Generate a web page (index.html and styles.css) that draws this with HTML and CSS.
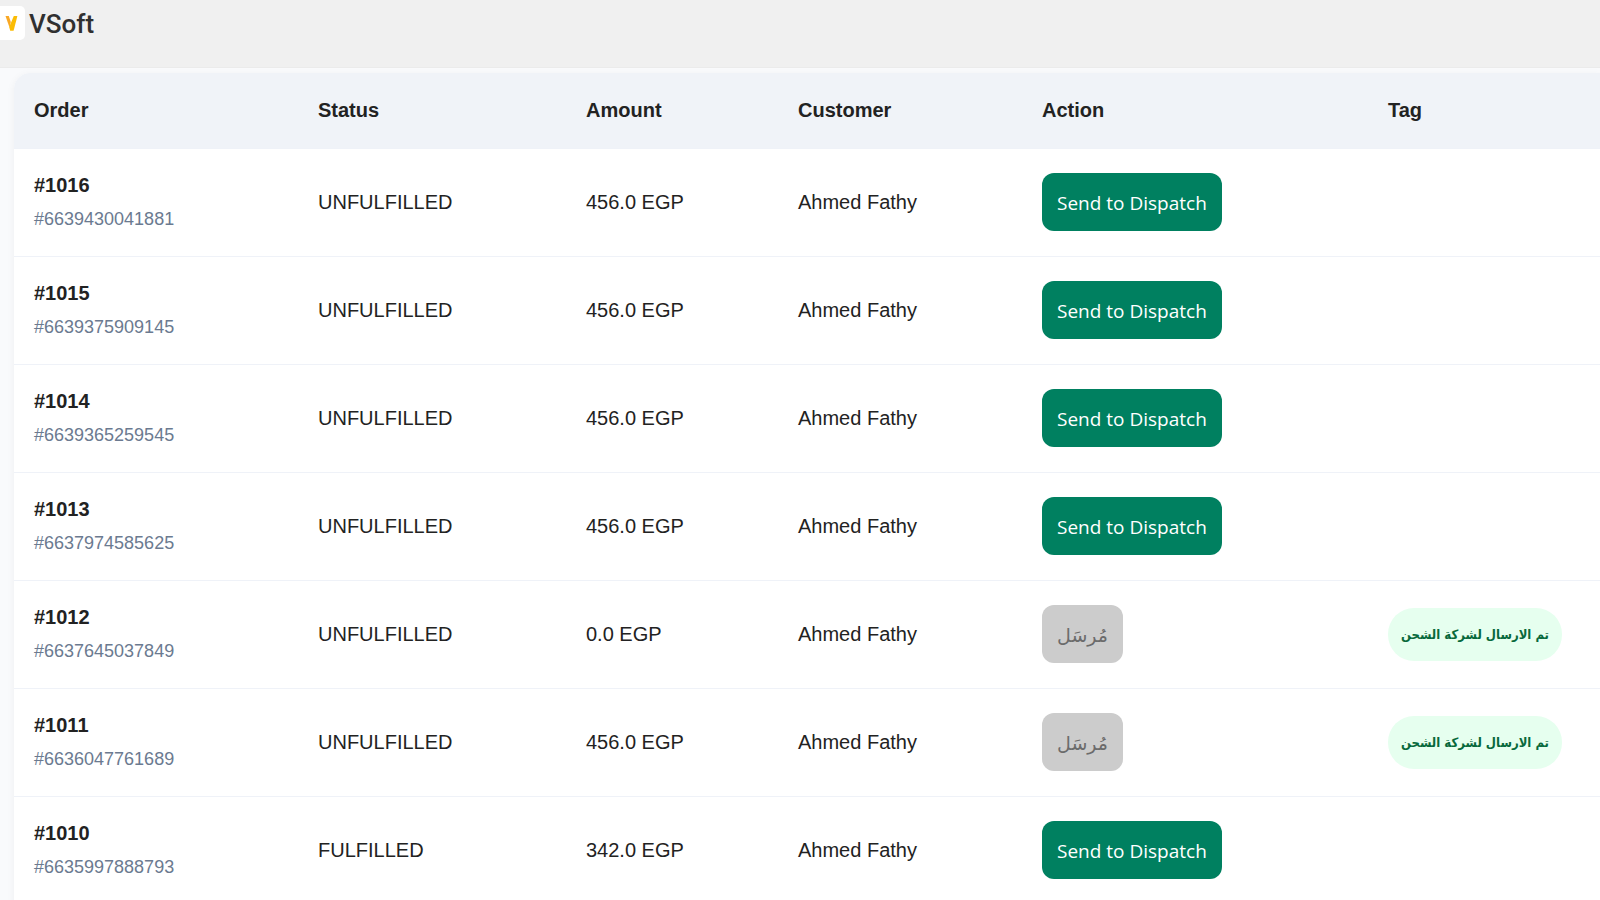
FILE: index.html
```html
<!DOCTYPE html>
<html lang="en">
<head>
    <meta charset="UTF-8">
    <meta name="viewport" content="width=device-width, initial-scale=1.0">
    <title>VSoft</title>
    <link rel="stylesheet" href="styles.css">
</head>
<body>
    <header class="header">
        <svg class="logo" viewBox="0 0 25 34" aria-hidden="true">
            <rect x="-6" width="31" height="34" rx="5" fill="#fff"/>
            <path d="M5.500 10h3.300l2 6-1.300 5.500z" fill="#f9a825"/>
            <path d="M9.200 21L13.800 10h3.600L13.600 24.800h-3.400z" fill="#fbbc04"/>
        </svg>
        <h1>VSoft</h1>
    </header>

    <main class="container">
        <table>
            <colgroup>
                <col class="col-order">
                <col class="col-status">
                <col class="col-amount">
                <col class="col-customer">
                <col class="col-action">
                <col>
            </colgroup>
            <thead>
                <tr>
                    <th>Order</th>
                    <th>Status</th>
                    <th>Amount</th>
                    <th>Customer</th>
                    <th>Action</th>
                    <th>Tag</th>
                </tr>
            </thead>
            <tbody>
                <tr>
                    <td><strong>#1016</strong><span class="order-id">#6639430041881</span></td>
                    <td>UNFULFILLED</td>
                    <td>456.0 EGP</td>
                    <td>Ahmed Fathy</td>
                    <td><button type="button" class="btn">Send to Dispatch</button></td>
                    <td></td>
                </tr>
                <tr>
                    <td><strong>#1015</strong><span class="order-id">#6639375909145</span></td>
                    <td>UNFULFILLED</td>
                    <td>456.0 EGP</td>
                    <td>Ahmed Fathy</td>
                    <td><button type="button" class="btn">Send to Dispatch</button></td>
                    <td></td>
                </tr>
                <tr>
                    <td><strong>#1014</strong><span class="order-id">#6639365259545</span></td>
                    <td>UNFULFILLED</td>
                    <td>456.0 EGP</td>
                    <td>Ahmed Fathy</td>
                    <td><button type="button" class="btn">Send to Dispatch</button></td>
                    <td></td>
                </tr>
                <tr>
                    <td><strong>#1013</strong><span class="order-id">#6637974585625</span></td>
                    <td>UNFULFILLED</td>
                    <td>456.0 EGP</td>
                    <td>Ahmed Fathy</td>
                    <td><button type="button" class="btn">Send to Dispatch</button></td>
                    <td></td>
                </tr>
                <tr>
                    <td><strong>#1012</strong><span class="order-id">#6637645037849</span></td>
                    <td>UNFULFILLED</td>
                    <td>0.0 EGP</td>
                    <td>Ahmed Fathy</td>
                    <td><button type="button" class="btn" lang="ar" disabled>مُرسَل</button></td>
                    <td><span class="tag" lang="ar" dir="rtl">تم الارسال لشركة الشحن</span></td>
                </tr>
                <tr>
                    <td><strong>#1011</strong><span class="order-id">#6636047761689</span></td>
                    <td>UNFULFILLED</td>
                    <td>456.0 EGP</td>
                    <td>Ahmed Fathy</td>
                    <td><button type="button" class="btn" lang="ar" disabled>مُرسَل</button></td>
                    <td><span class="tag" lang="ar" dir="rtl">تم الارسال لشركة الشحن</span></td>
                </tr>
                <tr>
                    <td><strong>#1010</strong><span class="order-id">#6635997888793</span></td>
                    <td>FULFILLED</td>
                    <td>342.0 EGP</td>
                    <td>Ahmed Fathy</td>
                    <td><button type="button" class="btn">Send to Dispatch</button></td>
                    <td></td>
                </tr>
            </tbody>
        </table>
    </main>
</body>
</html>
```
FILE: styles.css
```css
* {
    box-sizing: border-box;
}
body {
    margin: 0;
    font-family: "Liberation Sans", Arial, sans-serif;
    font-size: 20px;
    line-height: 28px;
    background: #f9fafc;
    color: #222;
    overflow: hidden;
}
.header {
    display: flex;
    align-items: flex-start;
    gap: 4px;
    height: 68px;
    padding-top: 6px;
    background: #f0f0f0;
    border-bottom: 1px solid #ebebeb;
}
.logo {
    width: 25px;
    height: 34px;
}
.header h1 {
    margin: 0;
    font-family: Roboto, sans-serif;
    font-size: 26px;
    font-weight: 500;
    line-height: 36px;
    color: #303030;
}
.container {
    margin: 5px 0 0 14px;
    background: white;
    border-top-left-radius: 16px;
    box-shadow: 0 2px 8px rgba(0, 0, 0, 0.05);
    overflow: hidden;
}
table {
    width: 100%;
    table-layout: fixed;
    border-collapse: collapse;
}
.col-order {
    width: 284px;
}
.col-status {
    width: 268px;
}
.col-amount {
    width: 212px;
}
.col-customer {
    width: 244px;
}
.col-action {
    width: 346px;
}
th, td {
    padding: 0 20px;
    text-align: left;
    white-space: nowrap;
    border-bottom: 1px solid #eff2f8;
}
th {
    height: 75px;
    background: #f0f3f8;
}
td {
    height: 108px;
}
strong {
    display: block;
    line-height: 34px;
}
.order-id {
    display: block;
    font-size: 18px;
    line-height: 34px;
    color: #6b7a90;
}
.btn {
    height: 58px;
    padding: 2px 15px 0;
    border: none;
    border-radius: 12px;
    background: #008060;
    color: white;
    font-family: "Open Sans", "Noto Sans", "DejaVu Sans", sans-serif;
    font-size: 19px;
    vertical-align: middle;
    cursor: pointer;
}
.btn:disabled {
    background: #ccc;
    color: #6b6b6b;
    cursor: not-allowed;
}
.tag {
    display: inline-block;
    padding: 0 13px;
    border-radius: 26px;
    background: #e6ffef;
    color: #08693c;
    font-family: "DejaVu Sans Condensed", "DejaVu Sans", sans-serif;
    font-size: 13px;
    font-weight: bold;
    line-height: 53px;
    vertical-align: middle;
}
```
